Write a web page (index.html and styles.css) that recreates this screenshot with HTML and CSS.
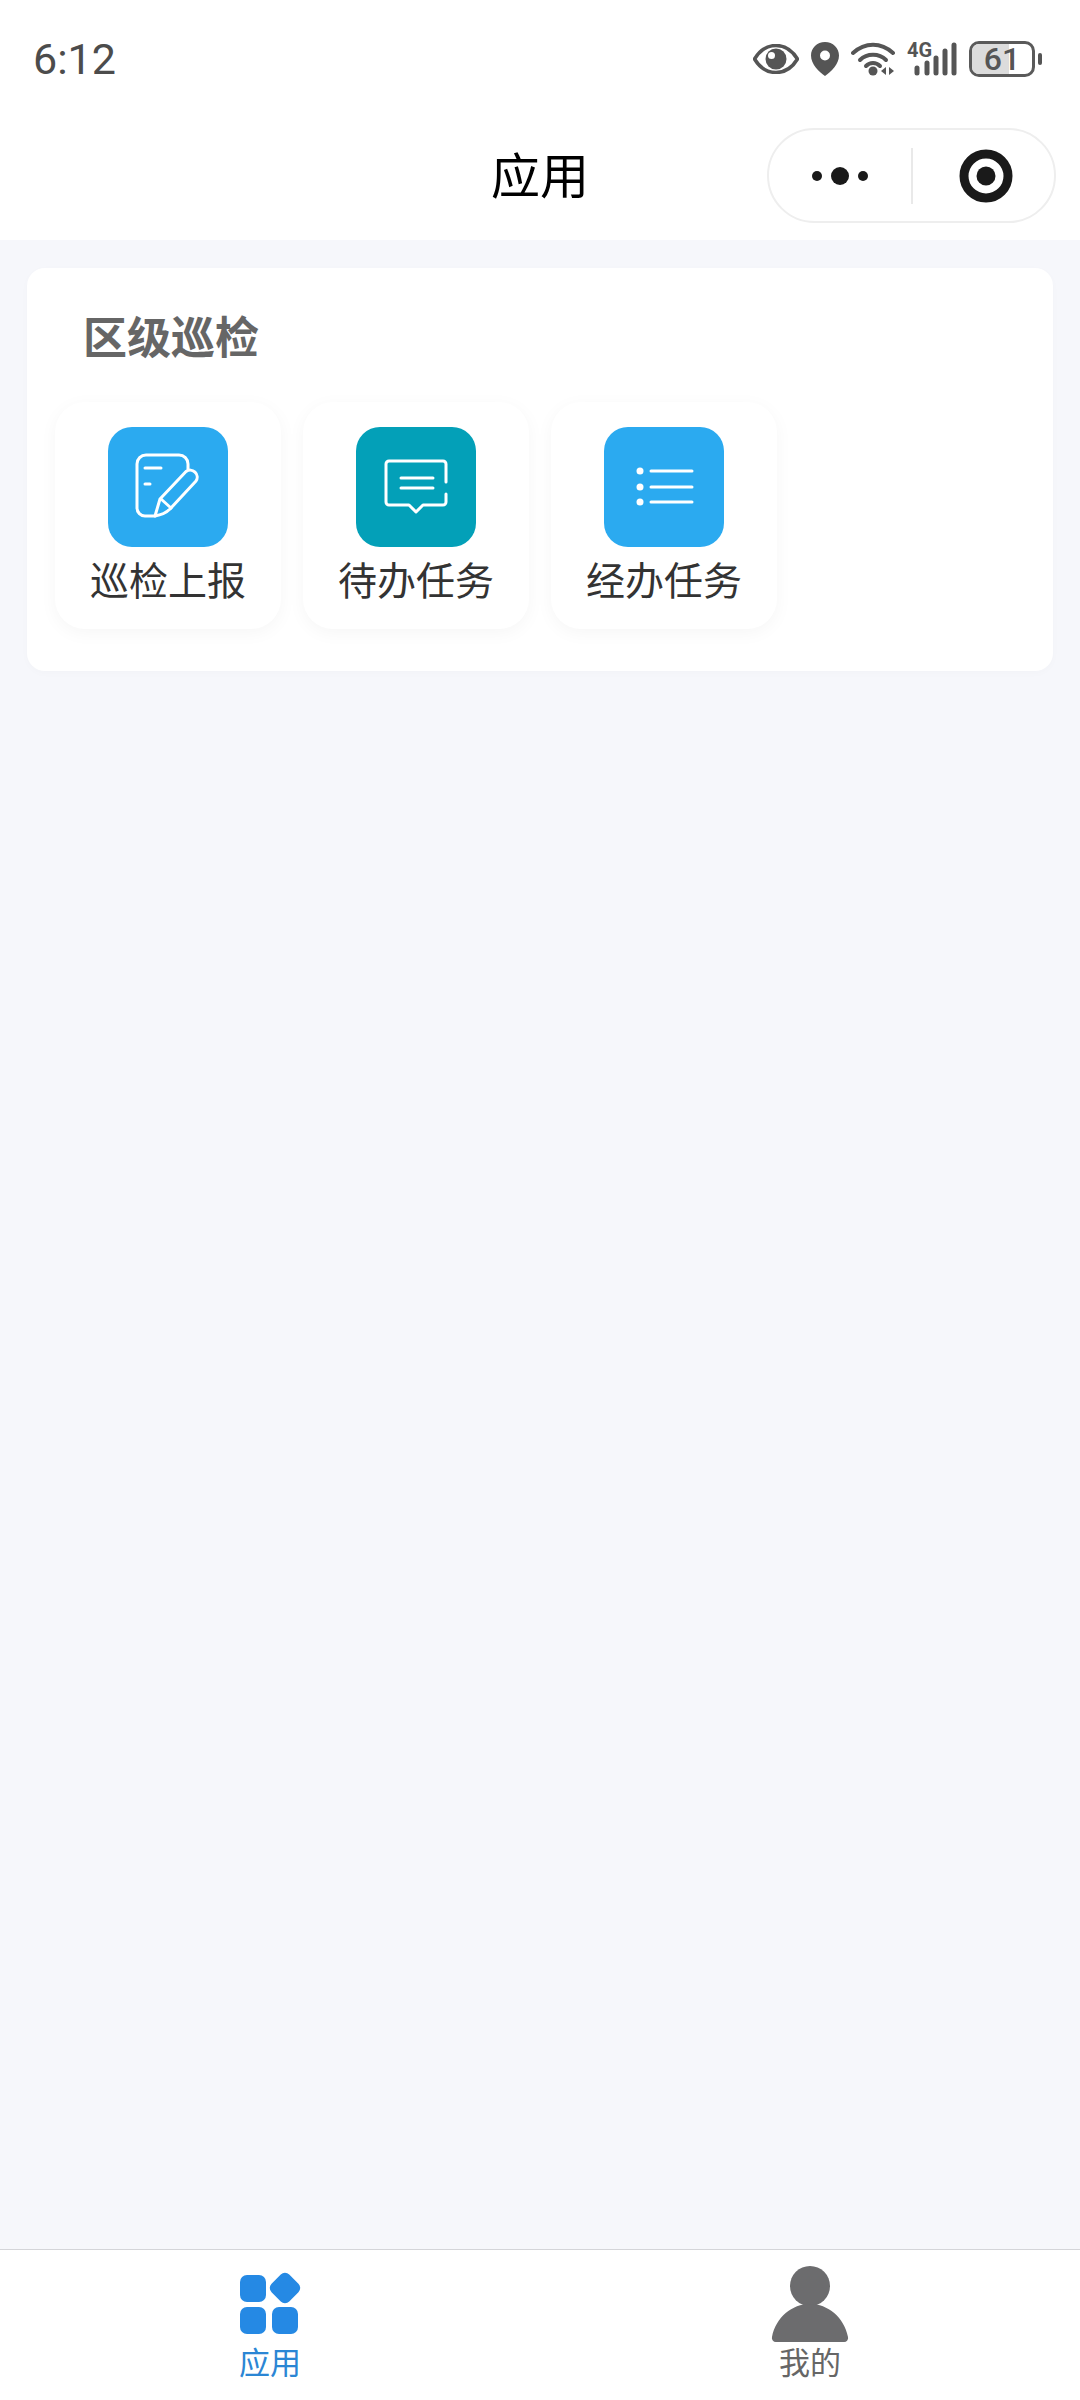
FILE: index.html

```html
<!DOCTYPE html>
<html>
<head>
	<meta charset="utf-8">
	<title>应用</title>
	<link rel="stylesheet" href="styles.css">
</head>
<body>
	<div class="page">

		<header class="top">
			<div class="statusBar">
				<span class="time">6:12</span>
				<div class="statusIcons">
					<svg class="eyeIcon" viewBox="0 0 46 30" width="46" height="30">
						<path d="M1.5 15C7 6 14 1.5 23 1.5S39 6 44.5 15C39 24 32 28.5 23 28.5S7 24 1.5 15Z" fill="none" stroke="#555" stroke-width="3.5"/>
						<circle cx="23" cy="15" r="10.5" fill="#555"/>
						<circle cx="18.5" cy="11.5" r="3.5" fill="#fff"/>
					</svg>
					<svg class="pinIcon" viewBox="0 0 28 34" width="28" height="34">
						<path fill-rule="evenodd" d="M14 0C6 0 0 6 0 13.500C0 22 8 30 14 34C20 30 28 22 28 13.500C28 6 22 0 14 0ZM14 8.500A5 5 0 1 1 14 18.500A5 5 0 1 1 14 8.500Z" fill="#555"/>
					</svg>
					<svg class="wifiIcon" viewBox="0 0 44 34" width="44" height="34">
						<g fill="none" stroke="#555" stroke-width="4" stroke-linecap="round">
							<path d="M2 11C14 0 30 0 42 11"/>
							<path d="M9 18C16 11 28 11 35 18"/>
							<path d="M15 24C19 20 25 20 29 24"/>
						</g>
						<circle cx="22" cy="29" r="4.500" fill="#555"/>
						<path d="M35 25V33L30 29ZM38 25V33L43 29Z" fill="#555"/>
					</svg>
					<svg class="signalIcon" viewBox="0 -6 50 46" width="50" height="46">
						<text class="netText" x="0" y="15">4G</text>
						<g fill="none" stroke="#555" stroke-width="5" stroke-linecap="round">
							<path d="M10 26V31"/>
							<path d="M20 21V31"/>
							<path d="M29 16V31"/>
							<path d="M38 9V31"/>
							<path d="M47 3V31"/>
						</g>
					</svg>
					<div class="battery">
						<div class="batteryBody">
							<div class="batteryFill"></div>
							<span class="batteryText">61</span>
						</div>
						<div class="batteryNub"></div>
					</div>
				</div>
			</div>

			<nav class="navBar">
				<div class="navSide"></div>
				<h1 class="navTitle">应用</h1>
				<div class="capsule">
					<div class="capsulePart capsulePartLeft">
						<svg viewBox="0 0 60 20" width="60" height="20">
							<circle cx="7" cy="10" r="5" fill="#1a1a1a"/>
							<circle cx="30" cy="10" r="9" fill="#1a1a1a"/>
							<circle cx="53" cy="10" r="5" fill="#1a1a1a"/>
						</svg>
					</div>
					<div class="capsuleLine"></div>
					<div class="capsulePart capsulePartRight">
						<svg viewBox="0 0 54 54" width="54" height="54">
							<circle cx="27" cy="27" r="22" fill="none" stroke="#1a1a1a" stroke-width="9"/>
							<circle cx="27" cy="27" r="9.500" fill="#1a1a1a"/>
						</svg>
					</div>
				</div>
			</nav>
		</header>

		<main class="content">
			<section class="card">
				<h2 class="cardTitle">区级巡检</h2>
				<div class="tiles">

					<a class="tile">
						<span class="tileIcon tileIconBlue">
							<svg viewBox="0 0 120 120" width="120" height="120">
								<g fill="none" stroke="#fff" stroke-width="3" stroke-linecap="round" stroke-linejoin="round">
									<path d="M80 42V37A9 9 0 0 0 71 28H38A9 9 0 0 0 29 37V81A8 8 0 0 0 37 89H47"/>
									<path d="M47 89L52 72L78 44.500A7 7 0 0 1 88 54L62 82C58 86 53 88 47 89Z"/>
									<path d="M53 72L63 81"/>
									<path d="M37 41H53"/>
									<path d="M37 57H42"/>
								</g>
							</svg>
						</span>
						<span class="tileLabel">巡检上报</span>
					</a>

					<a class="tile">
						<span class="tileIcon tileIconTeal">
							<svg viewBox="0 0 120 120" width="120" height="120">
								<g fill="none" stroke="#fff" stroke-width="3" stroke-linecap="round" stroke-linejoin="round">
									<path d="M90 55V37A3 3 0 0 0 87 34H33A3 3 0 0 0 30 37V75A3 3 0 0 0 33 78H53L60 85L67 78H87A3 3 0 0 0 90 75V67"/>
									<path d="M45 51H77"/>
									<path d="M45 61H77"/>
								</g>
							</svg>
						</span>
						<span class="tileLabel">待办任务</span>
					</a>

					<a class="tile">
						<span class="tileIcon tileIconBlue">
							<svg viewBox="0 0 120 120" width="120" height="120">
								<g fill="#fff">
									<circle cx="36" cy="44" r="3.500"/>
									<circle cx="36" cy="60" r="3.500"/>
									<circle cx="36" cy="75" r="3.500"/>
								</g>
								<g stroke="#fff" stroke-width="3" stroke-linecap="round">
									<path d="M47 44H88"/>
									<path d="M47 60H88"/>
									<path d="M47 75H88"/>
								</g>
							</svg>
						</span>
						<span class="tileLabel">经办任务</span>
					</a>

				</div>
			</section>
		</main>

		<footer class="tabBar">
			<a class="tab tabActive">
				<svg viewBox="0 0 80 78" width="80" height="78">
					<g fill="#2589e4">
						<rect x="10" y="10" width="26" height="27" rx="7"/>
						<rect x="10" y="42" width="26" height="27" rx="7"/>
						<rect x="42" y="42" width="26" height="27" rx="7"/>
						<rect x="42.500" y="10.500" width="25" height="25" rx="6" transform="rotate(45 55 23)"/>
					</g>
				</svg>
				<span class="tabLabel">应用</span>
			</a>
			<a class="tab">
				<svg viewBox="0 0 80 78" width="80" height="78">
					<g fill="#6c6c6e">
						<circle cx="40" cy="21" r="20"/>
						<path d="M6 77A4 4 0 0 1 2 72C6 52 22 39 40 39S74 52 78 72A4 4 0 0 1 74 77Z"/>
					</g>
				</svg>
				<span class="tabLabel">我的</span>
			</a>
		</footer>

	</div>
</body>
</html>
```

FILE: styles.css

```css
body {
	margin: 0;
	font-family: "Noto Sans CJK SC", "Noto Sans", sans-serif;
	background-color: #f6f7fb;
}

.page {
	display: flex;
	flex-direction: column;
	width: 1080px;
	height: 2400px;
}

/* status bar and title */
.top {
	background-color: #fff;
}

.statusBar {
	display: flex;
	justify-content: space-between;
	align-items: center;
	height: 118px;
	padding: 0 38px 0 33px;
}

.time {
	font-family: Roboto, sans-serif;
	font-size: 43px;
	color: #4c4c4c;
}

.statusIcons {
	display: flex;
	align-items: center;
	gap: 12px;
}

.netText {
	font-family: Roboto, sans-serif;
	font-size: 20px;
	font-weight: bold;
	fill: #555;
}

.battery {
	display: flex;
	align-items: center;
	gap: 3px;
}

.batteryBody {
	position: relative;
	display: flex;
	justify-content: center;
	align-items: center;
	box-sizing: border-box;
	width: 66px;
	height: 36px;
	border: 3px solid #5a5a5a;
	border-radius: 10px;
	overflow: hidden;
}

.batteryFill {
	position: absolute;
	left: 0;
	top: 0;
	bottom: 0;
	width: 61%;
	background-color: #dcdcdc;
}

.batteryText {
	position: relative;
	font-family: Roboto, sans-serif;
	font-size: 32px;
	font-weight: 500;
	line-height: 30px;
	color: #555;
}

.batteryNub {
	width: 4px;
	height: 12px;
	border-radius: 2px;
	background-color: #555;
}

.navBar {
	display: grid;
	grid-template-columns: 1fr auto 1fr;
	align-items: center;
	height: 95px;
	padding: 10px 24px 17px 24px;
}

.navTitle {
	margin: 0;
	padding-bottom: 6px;
	font-size: 49px;
	font-weight: 400;
	color: #000;
}

.capsule {
	justify-self: end;
	display: flex;
	align-items: center;
	box-sizing: border-box;
	width: 289px;
	height: 95px;
	border: 2px solid #eeeeee;
	border-radius: 48px;
}

.capsulePart {
	display: flex;
	justify-content: center;
}

.capsulePartLeft {
	width: 142px;
}

.capsulePartRight {
	flex: 1;
	padding-left: 5px;
}

.capsuleLine {
	width: 2px;
	height: 56px;
	background-color: #e9e9e9;
}

/* main area */
.content {
	flex: 1;
	padding: 28px 27px;
}

.card {
	height: 403px;
	border-radius: 18px;
	background-color: #fff;
	box-shadow: 0 2px 8px rgba(0, 0, 0, 0.02);
}

.cardTitle {
	margin: 0;
	padding-left: 56px;
	font-size: 44px;
	font-weight: bold;
	line-height: 134px;
	color: #666;
}

.tiles {
	display: flex;
	gap: 22px;
	padding-left: 28px;
}

.tile {
	display: flex;
	flex-direction: column;
	align-items: center;
	box-sizing: border-box;
	width: 226px;
	height: 227px;
	padding-top: 25px;
	border-radius: 30px;
	background-color: #fff;
	box-shadow: 0 4px 18px rgba(0, 0, 0, 0.04);
}

.tileIcon {
	display: block;
	width: 120px;
	height: 120px;
	border-radius: 24px;
}

.tileIcon svg {
	display: block;
}

.tileIconBlue {
	background-color: #2baaf0;
}

.tileIconTeal {
	background-color: #03a0b8;
}

.tileLabel {
	margin-top: 5px;
	font-size: 39px;
	line-height: 52px;
	color: #333;
}

/* tab bar */
.tabBar {
	display: flex;
	box-sizing: border-box;
	height: 151px;
	padding-top: 15px;
	border-top: 1px solid #d4d5d9;
	background-color: #fff;
}

.tab {
	flex: 1;
	display: flex;
	flex-direction: column;
	align-items: center;
}

.tab svg {
	display: block;
}

.tabLabel {
	font-size: 31px;
	line-height: 36px;
	color: #666;
}

.tabActive .tabLabel {
	color: #2b86d4;
}
```
